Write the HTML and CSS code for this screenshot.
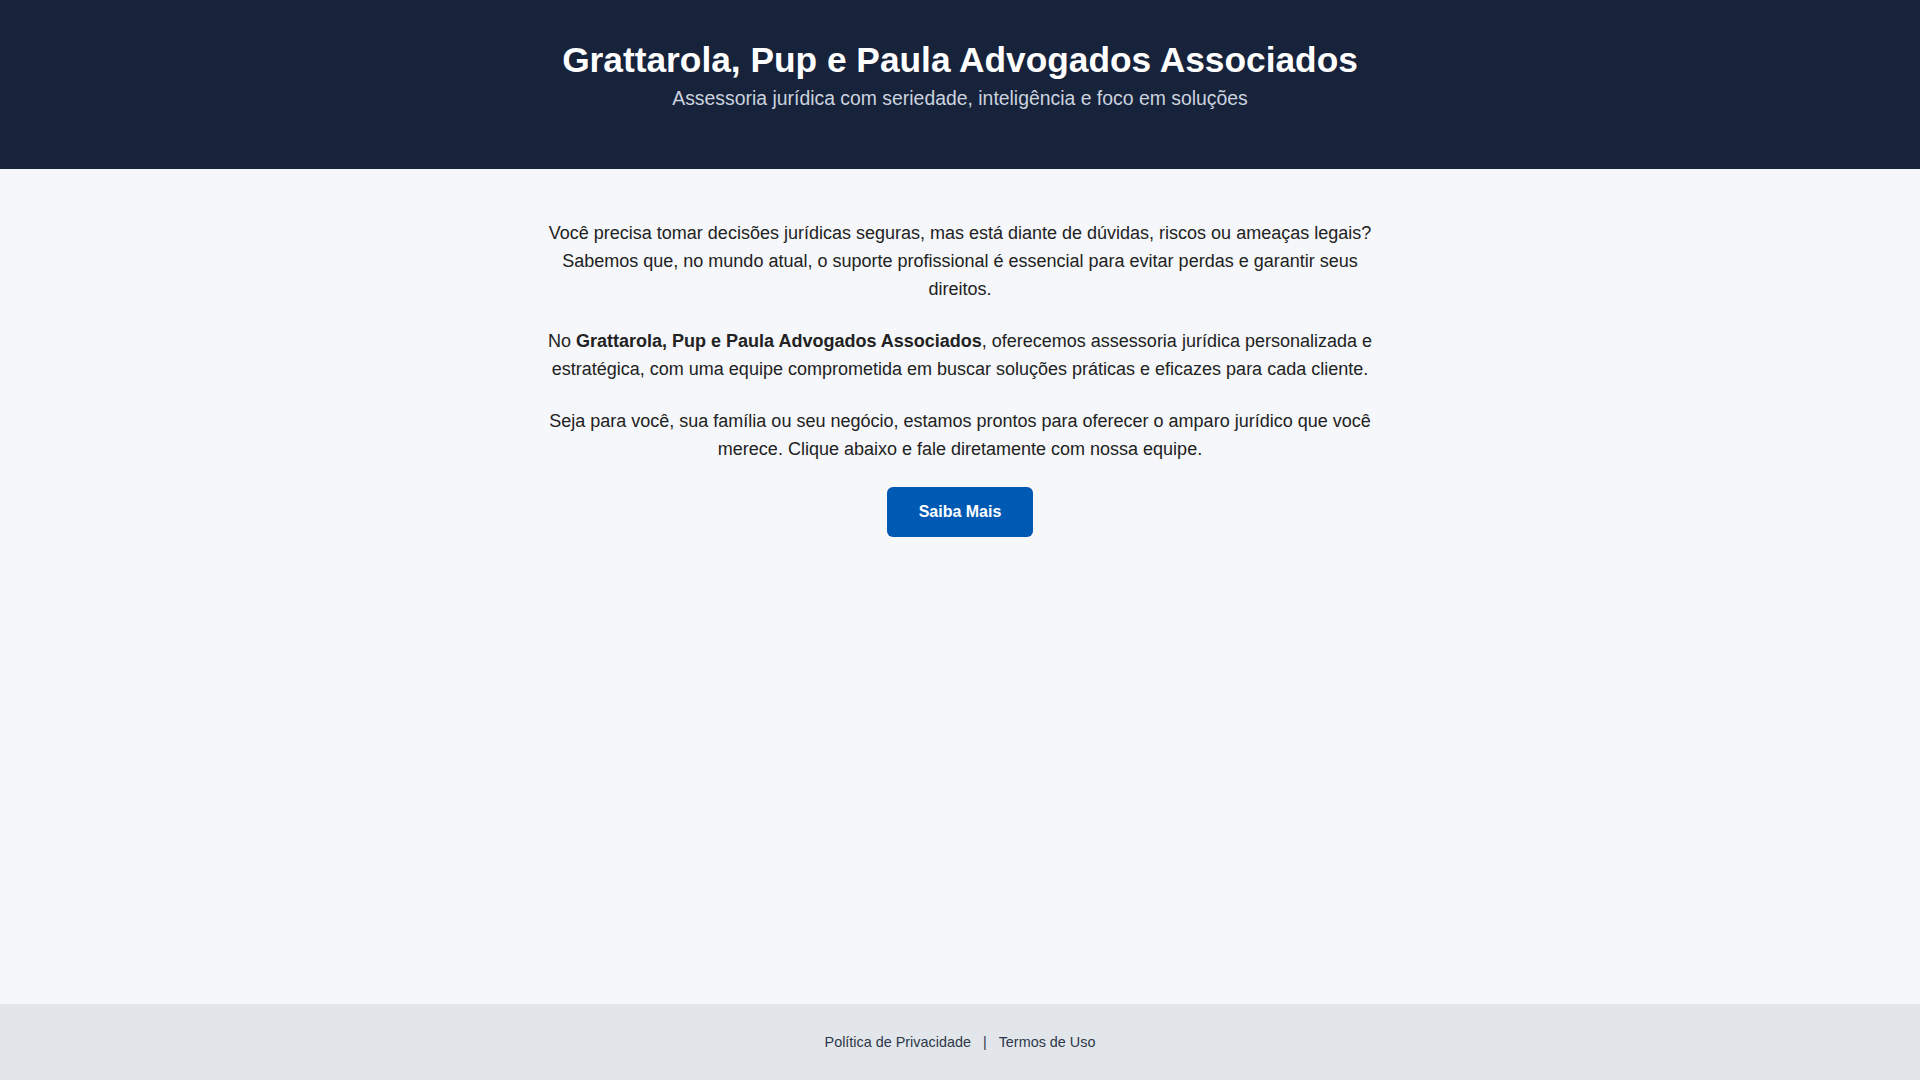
FILE: index.html
```html
<!DOCTYPE html>
<html lang="pt-BR">
<head>
<meta charset="utf-8">
<title>Grattarola, Pup e Paula Advogados Associados</title>
<link rel="stylesheet" href="styles.css">
</head>
<body>
<header class="site-header">
  <h1 class="site-title">Grattarola, Pup e Paula Advogados Associados</h1>
  <p class="site-tagline">Assessoria jurídica com seriedade, inteligência e foco em soluções</p>
</header>
<main class="content">
  <section class="intro">
    <p>Você precisa tomar decisões jurídicas seguras, mas está diante de dúvidas, riscos ou ameaças legais? Sabemos que, no mundo atual, o suporte profissional é essencial para evitar perdas e garantir seus direitos.</p>
    <p>No <strong>Grattarola, Pup e Paula Advogados Associados</strong>, oferecemos assessoria jurídica personalizada e estratégica, com uma equipe comprometida em buscar soluções práticas e eficazes para cada cliente.</p>
    <p>Seja para você, sua família ou seu negócio, estamos prontos para oferecer o amparo jurídico que você merece. Clique abaixo e fale diretamente com nossa equipe.</p>
    <a class="cta" href="#">Saiba Mais</a>
  </section>
</main>
<footer class="site-footer">
  <a href="#">Política de Privacidade</a> | <a href="#">Termos de Uso</a>
</footer>
</body>
</html>
```
FILE: styles.css
```css
* { box-sizing: border-box; }
html, body { margin: 0; padding: 0; }
body {
  font-family: "Liberation Sans", Arial, sans-serif;
  background: #f5f7fa;
  color: #222;
  min-height: 100vh;
  display: flex;
  flex-direction: column;
}
.site-header {
  background: #17223b;
  color: #fff;
  text-align: center;
  padding: 40px 20px 59px;
}
.site-title {
  margin: 0 0 7px;
  font-size: 35.3px;
  font-weight: bold;
  line-height: normal;
}
.site-tagline {
  margin: 0;
  font-size: 19.4px;
  line-height: normal;
  color: #cbd3df;
}
.content {
  flex: 1;
  padding: 50px 20px 40px;
}
.intro {
  max-width: 840px;
  margin: 0 auto;
  text-align: center;
}
.intro p {
  margin: 0 0 23.6px;
  font-size: 18px;
  line-height: 28.2px;
  color: #222;
}
.cta {
  display: inline-block;
  background: #0059b3;
  color: #fff;
  font-weight: bold;
  font-size: 16px;
  line-height: 18px;
  padding: 16px 32px;
  border-radius: 6px;
  text-decoration: none;
}
.site-footer {
  background: #e2e6eb;
  text-align: center;
  padding: 30px 20px;
  font-size: 14.4px;
  line-height: normal;
  color: #2d3748;
}
.site-footer a {
  color: #2d3748;
  text-decoration: none;
  margin: 0 8px;
}
```
